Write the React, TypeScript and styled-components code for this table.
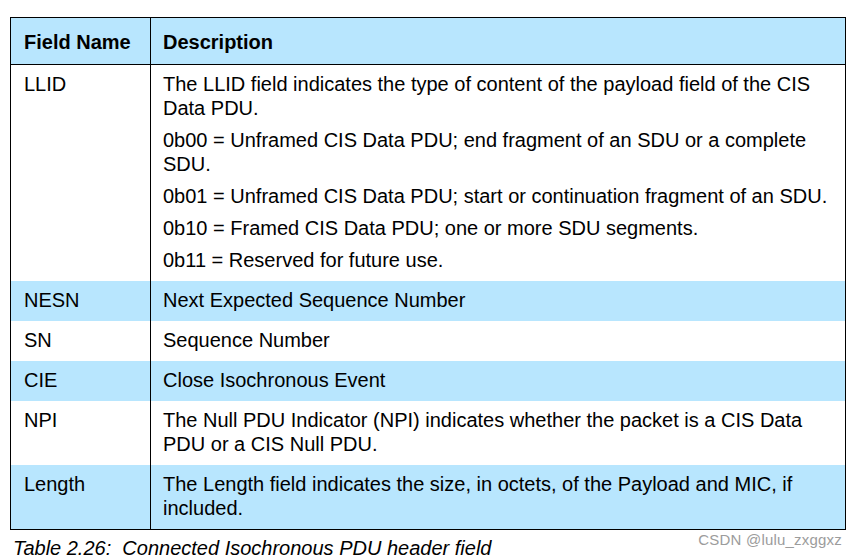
import React from 'react'
import styled, { createGlobalStyle } from 'styled-components'

const GlobalStyle = createGlobalStyle`
    html, body {
        margin: 0;
        padding: 0;
        background: #fff;
    }
    body {
        font-family: "Liberation Sans", Arial, sans-serif;
        color: #000;
    }
`

const HEAD_BG = '#b8e6fe'

const PageStyled = styled.main`
    position: relative;
    width: 856px;
    height: 558px;
    overflow: hidden;
    padding: 17px 0 0 10px;
    box-sizing: border-box;
`

const TableStyled = styled.div`
    display: grid;
    grid-template-columns: 139px 1fr;
    width: 836px;
    border: 1px solid #000;
    box-sizing: border-box;
    font-size: 20px;
    line-height: 24px;
`

const CellStyled = styled.div<{ $shaded?: boolean; $desc?: boolean; $head?: boolean }>`
    background-color: ${p => (p.$shaded ? HEAD_BG : '#fff')};
    border-left: ${p => (p.$desc ? '1px solid #000' : 'none')};
    border-bottom: ${p => (p.$head ? '1px solid #000' : 'none')};
    padding: ${p => (p.$head ? '12px 10px 10px' : '7px 10px 9px')};
    padding-left: ${p => (p.$desc ? '12px' : '13px')};
    font-weight: ${p => (p.$head ? 700 : 400)};
`

const ParaStyled = styled.p`
    margin: 0;
    & + & {
        margin-top: 8px;
    }
`

const CaptionStyled = styled.div`
    margin: 7px 0 0 3px;
    font-style: italic;
    font-size: 20px;
    line-height: 23px;
    white-space: pre;
`

const WatermarkStyled = styled.span`
    position: absolute;
    right: 14px;
    top: 531px;
    font-size: 15px;
    color: #9c9c9c;
    letter-spacing: 0.2px;
`

type Row = { name: string; desc: string[] }

const rows: Row[] = [
    {
        name: 'LLID',
        desc: [
            'The LLID field indicates the type of content of the payload field of the CIS Data PDU.',
            '0b00 = Unframed CIS Data PDU; end fragment of an SDU or a complete SDU.',
            '0b01 = Unframed CIS Data PDU; start or continuation fragment of an SDU.',
            '0b10 = Framed CIS Data PDU; one or more SDU segments.',
            '0b11 = Reserved for future use.',
        ],
    },
    { name: 'NESN', desc: ['Next Expected Sequence Number'] },
    { name: 'SN', desc: ['Sequence Number'] },
    { name: 'CIE', desc: ['Close Isochronous Event'] },
    {
        name: 'NPI',
        desc: ['The Null PDU Indicator (NPI) indicates whether the packet is a CIS Data PDU or a CIS Null PDU.'],
    },
    {
        name: 'Length',
        desc: ['The Length field indicates the size, in octets, of the Payload and MIC, if included.'],
    },
]

export default function App() {
    return (
        <>
            <GlobalStyle />
            <PageStyled>
                <TableStyled>
                    <CellStyled $shaded $head>Field Name</CellStyled>
                    <CellStyled $shaded $head $desc>Description</CellStyled>
                    {rows.map((r, i) => (
                        <React.Fragment key={r.name}>
                            <CellStyled $shaded={i % 2 === 1}>{r.name}</CellStyled>
                            <CellStyled $shaded={i % 2 === 1} $desc>
                                {r.desc.map(d => <ParaStyled key={d}>{d}</ParaStyled>)}
                            </CellStyled>
                        </React.Fragment>
                    ))}
                </TableStyled>
                <CaptionStyled>{'Table 2.26:  Connected Isochronous PDU header field'}</CaptionStyled>
                <WatermarkStyled>CSDN @lulu_zxggxz</WatermarkStyled>
            </PageStyled>
        </>
    )
}
